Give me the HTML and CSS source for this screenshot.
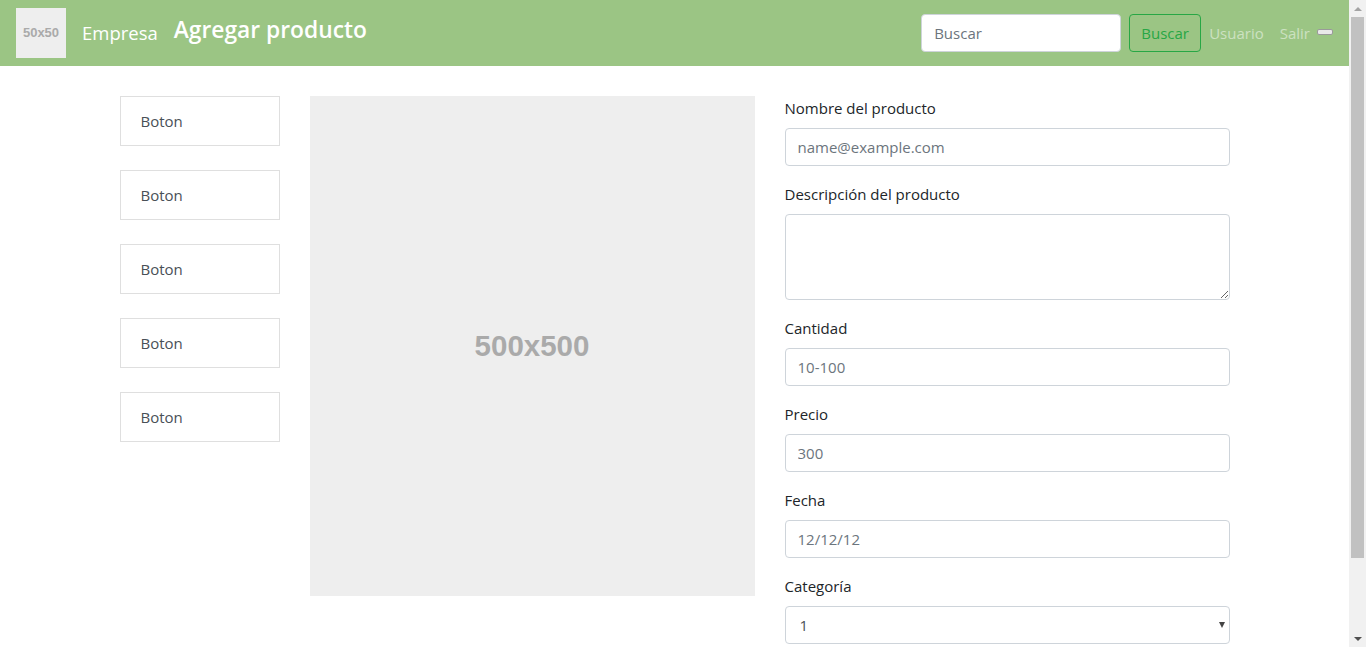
FILE: index.html
```html
<!DOCTYPE html>
<html lang="es">
<head>
<meta charset="utf-8">
<title>Agregar producto</title>
<link rel="stylesheet" href="styles.css">
</head>
<body>
<div class="page">
  <nav class="navbar">
    <a class="brand" href="#">
      <span class="logo">50x50</span>
      <span class="brand-name">Empresa</span>
    </a>
    <h4 class="page-title">Agregar producto</h4>
    <form class="search">
      <input class="search-input" type="text" placeholder="Buscar">
      <button class="btn-outline" type="button">Buscar</button>
    </form>
    <ul class="nav-links">
      <li><a class="nav-link" href="#">Usuario</a></li>
      <li><a class="nav-link last" href="#">Salir</a></li>
      <li><span class="pill-icon"></span></li>
    </ul>
  </nav>
  <main class="container">
    <div class="row">
      <div class="side">
        <a class="side-btn" href="#">Boton</a>
        <a class="side-btn" href="#">Boton</a>
        <a class="side-btn" href="#">Boton</a>
        <a class="side-btn" href="#">Boton</a>
        <a class="side-btn" href="#">Boton</a>
      </div>
      <div class="image-col">
        <div class="placeholder-img">500x500</div>
      </div>
      <form class="form-col">
        <div class="group">
          <label class="label">Nombre del producto</label>
          <input class="control" type="text" placeholder="name@example.com">
        </div>
        <div class="group">
          <label class="label">Descripción del producto</label>
          <textarea class="control area" rows="3"></textarea>
        </div>
        <div class="group">
          <label class="label">Cantidad</label>
          <input class="control" type="text" placeholder="10-100">
        </div>
        <div class="group">
          <label class="label">Precio</label>
          <input class="control" type="text" placeholder="300">
        </div>
        <div class="group">
          <label class="label">Fecha</label>
          <input class="control" type="text" placeholder="12/12/12">
        </div>
        <div class="group">
          <label class="label">Categoría</label>
          <div class="select-wrap">
            <select class="control select">
              <option>1</option>
              <option>2</option>
              <option>3</option>
            </select>
          </div>
        </div>
      </form>
    </div>
  </main>
</div>
<div class="scrollbar">
  <span class="sb-arrow up"></span>
  <div class="sb-track">
    <div class="sb-thumb"></div>
  </div>
  <span class="sb-arrow down"></span>
</div>
</body>
</html>
```
FILE: styles.css
```css
* { box-sizing: border-box; }
html, body {
  height: 100%;
  overflow: hidden;
}
body {
  margin: 0;
  display: flex;
  font-family: "Open Sans", "Noto Sans", sans-serif;
  font-size: 15px;
  line-height: 24px;
  color: #212529;
  background: #fff;
}
.page {
  flex: 1;
  min-width: 0;
  overflow: hidden;
}
.navbar {
  display: flex;
  align-items: center;
  height: 66px;
  padding: 8px 16px;
  background: #9bc584;
}
.brand {
  display: flex;
  align-items: center;
  text-decoration: none;
  margin-right: 16px;
}
.logo {
  width: 50px;
  height: 50px;
  background: #eeeeee;
  color: #aaaaaa;
  font-family: "Liberation Sans", Arial, sans-serif;
  font-weight: bold;
  font-size: 13px;
  display: flex;
  align-items: center;
  justify-content: center;
  margin-right: 16px;
}
.brand-name {
  color: #fff;
  font-size: 18.5px;
  line-height: 30px;
}
.page-title {
  margin: 0 0 8px 0;
  color: #fff;
  font-size: 22.8px;
  font-weight: 600;
  line-height: 27px;
}
.search {
  margin-left: auto;
  display: flex;
  align-items: center;
}
.search-input {
  width: 200px;
  height: 38px;
  padding: 6px 12px;
  border: 1px solid #ced4da;
  border-radius: 4px;
  font: inherit;
  color: #495057;
  margin-right: 8px;
}
.search-input::placeholder { color: #6c757d; }
.btn-outline {
  width: 72px;
  height: 38px;
  padding: 6px 0;
  border: 1px solid #28a745;
  border-radius: 4px;
  background: transparent;
  color: #28a745;
  font: inherit;
  text-align: center;
}
.nav-links {
  display: flex;
  align-items: center;
  list-style: none;
  margin: 0;
  padding: 0;
}
.nav-link {
  display: block;
  padding: 8px;
  color: rgba(255, 255, 255, 0.5);
  text-decoration: none;
}
.nav-link.last { padding-right: 7px; }
.pill-icon {
  display: block;
  width: 16px;
  height: 6px;
  margin-bottom: 2px;
  background: #e9e9e9;
  border: 1px solid #9a9a9a;
  border-radius: 2px;
}
.container {
  max-width: 1140px;
  margin: 0 auto;
  padding: 30px 15px;
}
.row {
  display: flex;
  gap: 30px;
  align-items: flex-start;
}
.side {
  width: 160px;
  display: flex;
  flex-direction: column;
  gap: 24px;
}
.side-btn {
  display: block;
  height: 50px;
  padding: 12px 20px;
  border: 1px solid #dfdfdf;
  color: #495057;
  text-decoration: none;
}
.image-col { width: 445px; }
.placeholder-img {
  height: 500px;
  background: #eeeeee;
  color: #aaaaaa;
  font-family: "Liberation Sans", Arial, sans-serif;
  font-weight: bold;
  font-size: 29.5px;
  display: flex;
  align-items: center;
  justify-content: center;
}
.form-col { width: 445px; }
.group { margin-bottom: 16px; }
.label {
  display: block;
  margin-bottom: 8px;
}
.control {
  display: block;
  width: 100%;
  height: 38px;
  padding: 6px 12px;
  border: 1px solid #ced4da;
  border-radius: 4px;
  font: inherit;
  color: #495057;
  background: #fff;
}
.control::placeholder { color: #6c757d; }
.area {
  height: 86px;
  resize: vertical;
}
.select-wrap { position: relative; }
.select {
  appearance: none;
  -webkit-appearance: none;
  padding-left: 14px;
}
.select-wrap::after {
  content: "";
  position: absolute;
  right: 5px;
  top: 16px;
  border-left: 3.5px solid transparent;
  border-right: 3.5px solid transparent;
  border-top: 6px solid #444;
  pointer-events: none;
}
.scrollbar {
  width: 17px;
  flex: none;
  height: 100%;
  background: #f1f1f1;
  display: flex;
  flex-direction: column;
  align-items: center;
}
.sb-arrow {
  flex: none;
  height: 17px;
  width: 17px;
  display: flex;
  align-items: center;
  justify-content: center;
}
.sb-arrow::before {
  content: "";
  border-left: 4px solid transparent;
  border-right: 4px solid transparent;
}
.sb-arrow.up::before { border-bottom: 4px solid #a3a3a3; }
.sb-arrow.down::before { border-top: 4px solid #505050; }
.sb-track {
  flex: 1;
  width: 100%;
  padding: 0 2px;
}
.sb-thumb {
  height: 541px;
  background: #c1c1c1;
}
```
